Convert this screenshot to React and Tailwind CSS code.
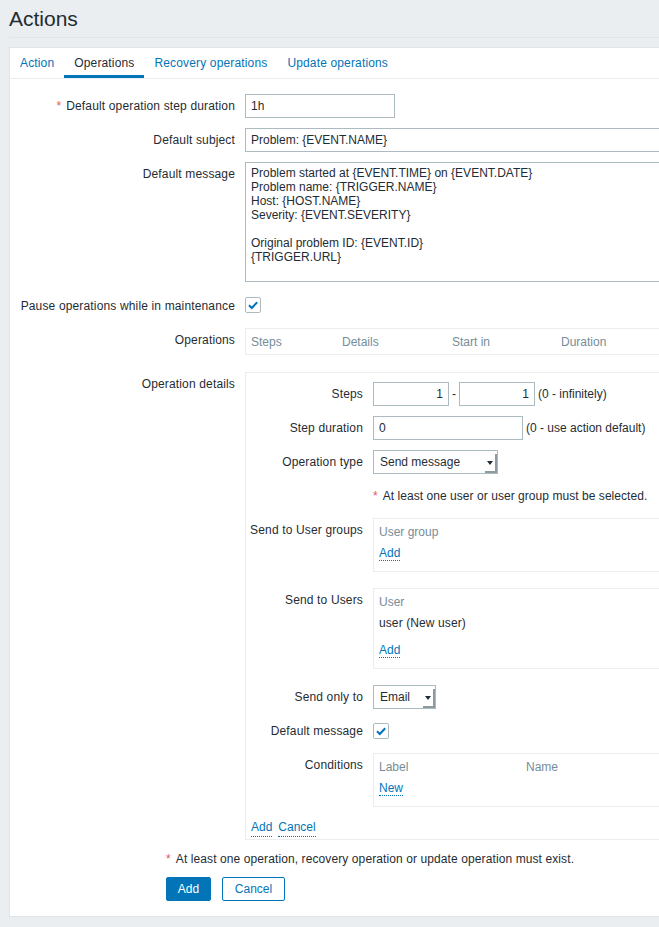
import React from 'react';

const font = { fontFamily: '"Liberation Sans", Arial, sans-serif' };

const Req = () => <span className="text-[#e45959] mr-[5px]">*</span>;

const Check = () => (
  <span className="w-[16px] h-[16px] border border-[#acbbc2] rounded-[2px] bg-white flex items-center justify-center">
    <svg width="12" height="12" viewBox="0 0 12 12">
      <path d="M2 6.2 L4.8 9 L10.2 3.2" fill="none" stroke="#0275b8" strokeWidth="2" />
    </svg>
  </span>
);

const Select = ({ value, width }) => (
  <div className={`h-[24px] ${width} border border-[#acbbc2] bg-white flex items-center pl-[6px] text-[#1f2c33]`}>
    <span className="flex-1">{value}</span>
    <span className="self-stretch mt-[3px] w-[12px] border-r-2 border-b-2 border-[#8d9aa0] flex items-center justify-center">
      <span className="w-0 h-0 border-l-[3px] border-r-[3px] border-t-[4px] border-l-transparent border-r-transparent border-t-[#1f2c33]" />
    </span>
  </div>
);

const Input = ({ value, className = '' }) => (
  <div className={`h-[24px] border border-[#acbbc2] bg-white px-[5px] leading-[22px] text-[#1f2c33] ${className}`}>
    {value}
  </div>
);

const Link = ({ children }) => (
  <span className="text-[#0275b8] border-b border-dotted border-[#0275b8]">{children}</span>
);

const Row = ({ label, req, children, className = '' }) => (
  <div className={`flex ${className}`}>
    <div className="w-[215px] shrink-0 flex justify-end whitespace-nowrap leading-[24px] tracking-[0.15px] text-[#1f2c33]">
      <span>
        {req && <Req />}
        {label}
      </span>
    </div>
    <div className="ml-[10px] flex-1">{children}</div>
  </div>
);

const SubRow = ({ label, children, className = '' }) => (
  <div className={`flex ${className}`}>
    <div className="w-[112px] shrink-0 flex justify-end whitespace-nowrap leading-[24px] tracking-[0.15px] text-[#1f2c33]">
      <span>{label}</span>
    </div>
    <div className="ml-[10px] flex-1">{children}</div>
  </div>
);

export default function App() {
  const tabs = ['Action', 'Operations', 'Recovery operations', 'Update operations'];

  return (
    <div className="min-h-screen w-full overflow-hidden bg-[#ebeef0] text-[12px] text-[#1f2c33]" style={font}>
      <div className="w-[1100px] pl-[9px]">
        <div className="pt-[6px] pb-[6px] border-b border-[#dfe4e7]">
          <h1 className="text-[21px] leading-[25px] text-[#1f2c33]">Actions</h1>
        </div>

        <div className="mt-[9px] bg-white border border-[#dfe4e7]">
          {/* tabs */}
          <div className="flex border-b border-[#ebeef0]">
            {tabs.map((t) => (
              <div
                key={t}
                className={`h-[30px] px-[10px] flex items-center tracking-[0.15px] ${
                  t === 'Operations' ? 'text-[#1f2c33] border-b-[3px] border-[#0275b8] pt-[2px]' : 'text-[#0275b8] pb-[1px]'
                }`}
              >
                {t}
              </div>
            ))}
          </div>

          {/* form */}
          <div className="pl-[10px] pt-[15px] flex flex-col gap-[10px]">
            <Row label="Default operation step duration" req>
              <Input value="1h" className="w-[150px]" />
            </Row>
            <Row label="Default subject">
              <Input value="Problem: {EVENT.NAME}" className="w-[453px]" />
            </Row>
            <Row label="Default message">
              <div className="w-[453px] h-[120px] border border-[#acbbc2] bg-white px-[5px] pt-[3px] leading-[14px]">
                <div>Problem started at {'{EVENT.TIME}'} on {'{EVENT.DATE}'}</div>
                <div>Problem name: {'{TRIGGER.NAME}'}</div>
                <div>Host: {'{HOST.NAME}'}</div>
                <div>Severity: {'{EVENT.SEVERITY}'}</div>
                <div className="h-[14px]" />
                <div>Original problem ID: {'{EVENT.ID}'}</div>
                <div>{'{TRIGGER.URL}'}</div>
              </div>
            </Row>
            <div className="flex h-[26px] items-center">
              <div className="w-[215px] shrink-0 text-right whitespace-nowrap tracking-[0.15px] pt-px">
                Pause operations while in maintenance
              </div>
              <div className="ml-[10px]">
                <Check />
              </div>
            </div>
            <Row label="Operations">
              <div className="w-[600px] h-[27px] border border-[#ebeef0] px-[5px] flex items-center text-[#768d99]">
                <span className="w-[91px]">Steps</span>
                <span className="w-[110px]">Details</span>
                <span className="w-[109px]">Start in</span>
                <span>Duration</span>
              </div>
            </Row>

            <Row label="Operation details" className="mt-[7px]">
              <div className="w-[700px] border border-[#ebeef0] pl-[5px] pt-[9px] pb-[2px] flex flex-col gap-[10px]">
                <SubRow label="Steps">
                  <div className="flex items-center">
                    <Input value="1" className="w-[76px] text-right" />
                    <span className="mx-[3px]">-</span>
                    <Input value="1" className="w-[76px] text-right" />
                    <span className="ml-[3px]">(0 - infinitely)</span>
                  </div>
                </SubRow>
                <SubRow label="Step duration">
                  <div className="flex items-center">
                    <Input value="0" className="w-[150px]" />
                    <span className="ml-[3px]">(0 - use action default)</span>
                  </div>
                </SubRow>
                <SubRow label="Operation type">
                  <Select value="Send message" width="w-[125px]" />
                </SubRow>
                <SubRow label="">
                  <div className="leading-[24px] tracking-[0.05px]">
                    <Req />
                    At least one user or user group must be selected.
                  </div>
                </SubRow>
                <SubRow label="Send to User groups">
                  <div className="w-[500px] h-[54px] border border-[#ebeef0] px-[5px] pt-[3px]">
                    <div className="leading-[20px] text-[#768d99]">User group</div>
                    <div className="leading-[22px]">
                      <Link>Add</Link>
                    </div>
                  </div>
                </SubRow>
                <SubRow label="Send to Users" className="mt-[6px]">
                  <div className="w-[500px] h-[81px] border border-[#ebeef0] px-[5px] pt-[3px]">
                    <div className="leading-[20px] text-[#768d99]">User</div>
                    <div className="leading-[22px] tracking-[0.1px]">user (New user)</div>
                    <div className="leading-[22px] mt-[5px]">
                      <Link>Add</Link>
                    </div>
                  </div>
                </SubRow>
                <SubRow label="Send only to" className="mt-[6px]">
                  <Select value="Email" width="w-[63px]" />
                </SubRow>
                <SubRow label="Default message">
                  <div className="h-[24px] flex items-center">
                    <Check />
                  </div>
                </SubRow>
                <SubRow label="Conditions">
                  <div className="w-[500px] h-[54px] border border-[#ebeef0] px-[5px] pt-[3px]">
                    <div className="leading-[20px] text-[#768d99] flex">
                      <span className="w-[147px]">Label</span>
                      <span>Name</span>
                    </div>
                    <div className="leading-[22px]">
                      <Link>New</Link>
                    </div>
                  </div>
                </SubRow>
                <div className="leading-[18px] flex gap-[6px] mt-px">
                  <Link>Add</Link>
                  <Link>Cancel</Link>
                </div>
              </div>
            </Row>
          </div>

          {/* footer */}
          <div className="pl-[156px] pt-[7px] pb-[15px]">
            <div className="leading-[24px] tracking-[0.1px]">
              <Req />
              At least one operation, recovery operation or update operation must exist.
            </div>
            <div className="flex gap-[11px] mt-[6px]">
              <button className="h-[24px] w-[45px] rounded-[2px] bg-[#0275b8] border border-[#0275b8] text-white">Add</button>
              <button className="h-[24px] w-[63px] rounded-[2px] bg-white border border-[#0275b8] text-[#0275b8]">Cancel</button>
            </div>
          </div>
        </div>
      </div>
    </div>
  );
}
